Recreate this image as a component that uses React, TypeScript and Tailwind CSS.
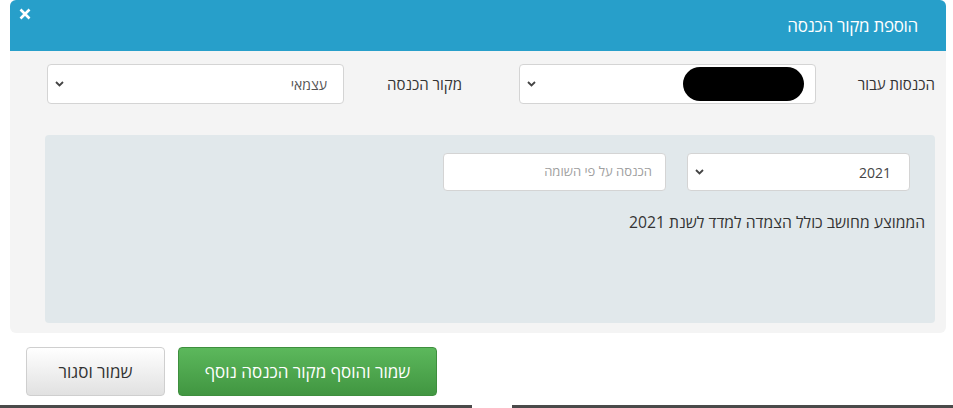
import React from 'react'

const Chevron = () => (
	<svg width="9" height="6" viewBox="0 0 9 6" className="shrink-0">
		<path d="M1 1 L4.5 4.5 L8 1" fill="none" stroke="#444" strokeWidth="1.8" />
	</svg>
)

function SelectBox({ width, height, children }: { width: string; height: string; children?: React.ReactNode }) {
	return (
		<div
			className={`${width} ${height} bg-white border border-[#d4d4d4] rounded-[4px] flex items-center justify-between pr-[16px] pl-[7px]`}
		>
			<div className="flex items-center">{children}</div>
			<Chevron />
		</div>
	)
}

export default function App() {
	return (
		<div className="relative w-[953px] h-[408px] bg-white font-['Open_Sans','DejaVu_Sans',sans-serif] text-[#333] overflow-hidden">
			<div className="ml-[10px] w-[936px]">
				{/* header */}
				<div className="h-[51px] bg-[#279fca] rounded-t-[6px] relative flex items-center pr-[28px]" dir="rtl">
					<span className="text-white text-[17px] font-medium tracking-[-0.3px]">הוספת מקור הכנסה</span>
					<svg width="12" height="12" viewBox="0 0 12 12" className="absolute left-[9px] top-[8px]">
						<path d="M1.5 1.5 L10.5 10.5 M10.5 1.5 L1.5 10.5" stroke="white" strokeWidth="2.6" />
					</svg>
				</div>

				{/* body */}
				<div className="bg-[#f4f4f4] rounded-b-[6px] h-[282px] pt-[13px]" dir="rtl">
					<div className="flex items-center pr-[11px]">
						<div className="w-[119px] text-[15px]">הכנסות עבור</div>
						<SelectBox width="w-[297px]" height="h-[40px]">
							<div className="w-[121px] h-[34px] bg-black rounded-full -mr-[5px]" />
						</SelectBox>
						<div className="w-[57px]" />
						<div className="w-[118px] text-[15px]">מקור הכנסה</div>
						<SelectBox width="w-[297px]" height="h-[40px]">
							<span className="text-[14px] text-[#555]">עצמאי</span>
						</SelectBox>
					</div>

					<div className="mr-[11px] ml-[35px] mt-[31px] h-[188px] bg-[#e1e8eb] rounded-[4px] pt-[18px] pr-[25px]">
						<div className="flex gap-[21px]">
							<SelectBox width="w-[223px]" height="h-[38px]">
								<span className="text-[14px] text-[#444] mr-[2px]">2021</span>
							</SelectBox>
							<div className="w-[223px] h-[38px] bg-white border border-[#d4d4d4] rounded-[4px] flex items-center pr-[13px]">
								<span className="text-[13px] text-[#a0a0a0]">הכנסה על פי השומה</span>
							</div>
						</div>
						<div className="mt-[20px] -mr-[15px] text-[15.7px] leading-[22px]">הממוצע מחושב כולל הצמדה למדד לשנת 2021</div>
					</div>
				</div>
			</div>

			{/* footer */}
			<div className="flex gap-[13px] pl-[26px] mt-[14px]">
				<button className="w-[139px] h-[49px] rounded-[4px] border border-[#cfcfcf] bg-gradient-to-b from-white to-[#e1e1e1] text-[17px] text-[#333]">
					שמור וסגור
				</button>
				<button className="w-[259px] h-[49px] rounded-[4px] border border-[#3e8f3e] bg-gradient-to-b from-[#5cb85c] to-[#419641] text-[17px] text-white">
					שמור והוסף מקור הכנסה נוסף
				</button>
			</div>

			<div className="absolute left-0 right-0 top-[405px] flex">
				<div className="w-[472px] h-[3px] bg-[#4a4a4a]" />
				<div className="w-[40px]" />
				<div className="flex-1 h-[3px] bg-[#4a4a4a]" />
			</div>
		</div>
	)
}
